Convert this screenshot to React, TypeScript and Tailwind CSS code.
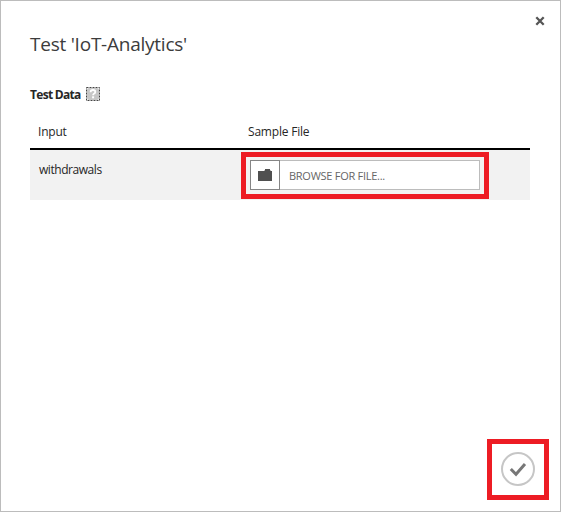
import React from 'react';

function HelpIcon() {
  return (
    <svg width="14" height="14" viewBox="0 0 14 14" className="ml-[5px] block">
      <rect x="1" y="1" width="12" height="12" rx="2" fill="#c6c6c6" />
      <path d="M4.7 5.2V4.8Q4.7 3 7 3T9.3 4.9Q9.3 6 7.9 6.7Q7.1 7.1 7.1 8.3" fill="none" stroke="#fff" strokeWidth="1.8" />
      <rect x="6.1" y="9.3" width="2" height="2" fill="#fff" />
      <rect x="0.5" y="0.5" width="13" height="13" fill="none" stroke="#444" strokeDasharray="2 1" />
    </svg>
  );
}

function FileField() {
  return (
    <div className="relative ml-[10px] mt-[10px] flex h-[30px] w-[230px]">
      <button className="flex h-[30px] w-[30px] items-center justify-center border border-[#858585] bg-white" aria-label="Choose file">
        <svg width="14" height="12" viewBox="0 0 14 12" className="block">
          <path d="M0 2H7V0H12V2H14V12H0Z" fill="#505050" />
          <path d="M6 1H7V2H6ZM12 1H13V2H12Z" fill="#b5b5b5" />
        </svg>
      </button>
      <div className="flex flex-1 items-center border border-l-0 border-[#bcbcbc] bg-white pl-[9px] pt-[2px] text-[11px] tracking-[-0.27px] text-[#666]">
        <span className="whitespace-nowrap">BROWSE FOR FILE...</span>
      </div>
      <div className="absolute -left-[9px] -top-[8px] h-[47px] w-[248px] border-[5px] border-[#ed1c24]" />
    </div>
  );
}

export default function App() {
  return (
    <div className="flex h-[512px] w-[561px] flex-col border border-[#bcbcbc] bg-white font-['Open_Sans','Noto_Sans',sans-serif] text-[12px] text-[#262626]">
      <header className="flex h-[84px] justify-between pl-[29px] pr-[15px]">
        <h1 className="mt-[29px] h-[28px] whitespace-nowrap text-[19px] leading-[28px] tracking-[-0.24px] text-[#3c3c3c]">Test 'IoT-Analytics'</h1>
        <button aria-label="Close" className="mt-[15px] h-[10px] w-[10px]">
          <svg width="10" height="10" viewBox="0 0 10 10" className="block">
            <path d="M1.3 1.3L8.7 8.7M8.7 1.3L1.3 8.7" stroke="#555" strokeWidth="2.3" />
          </svg>
        </button>
      </header>
      <main className="flex-1 px-[29px]">
        <div className="flex h-[18px] items-center">
          <h2 className="whitespace-nowrap pt-[2px] font-bold leading-[18px] tracking-[-0.7px]">Test Data</h2>
          <HelpIcon />
        </div>
        <div className="mt-[15px] w-[500px]">
          <div className="flex h-[32px] border-b-2 border-black leading-[18px]">
            <div className="w-[210px] pl-[8px] pt-[5px] tracking-[-0.2px]">Input</div>
            <div className="pl-[8px] pt-[5px] tracking-[-0.2px]">Sample File</div>
          </div>
          <div className="flex h-[50px] bg-[#f2f2f2]">
            <div className="w-[210px] pl-[9px] pt-[11px] leading-[18px] tracking-[-0.45px]">withdrawals</div>
            <FileField />
          </div>
        </div>
      </main>
      <footer className="flex justify-end pb-[11px] pr-[11px]">
        <div className="flex h-[61px] w-[62px] justify-center border-[5px] border-[#ed1c24] pt-[7px]">
          <button aria-label="Confirm" className="h-[36px]">
            <svg width="36" height="36" viewBox="0 0 36 36" className="block">
              <circle cx="18" cy="18" r="16" fill="none" stroke="#c6c6c6" strokeWidth="2" />
              <path d="M10.8 18L16 23.2L25 13" fill="none" stroke="#777" strokeWidth="3" />
            </svg>
          </button>
        </div>
      </footer>
    </div>
  );
}
